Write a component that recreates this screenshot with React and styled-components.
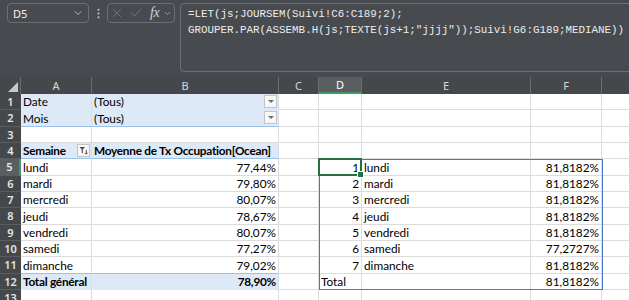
import styled, { createGlobalStyle } from "styled-components";
import { ChevronDown, X, Check, EllipsisVertical } from "lucide-react";

const GlobalStyle = createGlobalStyle`
  html, body { margin: 0; padding: 0; background: #ffffff; }
  body { width: 629px; height: 300px; overflow: hidden; }
`;

const COLS = [
  { key: "A", width: 71 },
  { key: "B", width: 187 },
  { key: "C", width: 40 },
  { key: "D", width: 43 },
  { key: "E", width: 169 },
  { key: "F", width: 71 },
  { key: "G", width: 110 },
];

const ROW_H = 16.33;
const HEAD_H = 17;
const ROWHEAD_W = 21;

const pivot = (text, extra = {}) => ({ text, fill: true, ...extra });

const days = [
  ["lundi", "77,44%", "81,8182%"],
  ["mardi", "79,80%", "81,8182%"],
  ["mercredi", "80,07%", "81,8182%"],
  ["jeudi", "78,67%", "81,8182%"],
  ["vendredi", "80,07%", "81,8182%"],
  ["samedi", "77,27%", "77,2727%"],
  ["dimanche", "79,02%", "81,8182%"],
];

const rows = [
  { n: 1, A: pivot("Date"), B: pivot("(Tous)", { drop: true }) },
  {
    n: 2,
    A: pivot("Mois", { bottomLine: true }),
    B: pivot("(Tous)", { drop: true, bottomLine: true }),
  },
  { n: 3 },
  {
    n: 4,
    A: pivot("Semaine", { bold: true, filter: true, bottomLine: true }),
    B: pivot("Moyenne de Tx Occupation[Ocean]", { bold: true, bottomLine: true }),
  },
  ...days.map(([day, avg, med], i) => ({
    n: 5 + i,
    A: { text: day },
    B: { text: avg, right: true },
    D: { text: String(i + 1), right: true },
    E: { text: day },
    F: { text: med, right: true },
  })),
  {
    n: 12,
    A: pivot("Total général", { bold: true, topLine: true }),
    B: pivot("78,90%", { bold: true, right: true, topLine: true }),
    D: { text: "Total" },
    F: { text: "81,8182%", right: true },
  },
  { n: 13 },
];

const Page = styled.div`
  width: 629px;
  height: 300px;
  display: flex;
  flex-direction: column;
  overflow: hidden;
  font-family: Lato, "Liberation Sans", sans-serif;
`;

const TopBar = styled.div`
  height: 77px;
  flex: none;
  background: #474b4f;
  display: flex;
  align-items: flex-start;
  padding: 3px 0 0 7px;
  box-sizing: border-box;
  overflow: hidden;
`;

const NameBox = styled.div`
  flex: none;
  width: 82px;
  height: 20px;
  box-sizing: border-box;
  border: 1px solid #6c7074;
  border-radius: 4px;
  display: flex;
  align-items: center;
  justify-content: space-between;
  padding: 0 4px 0 5px;
  color: #f2f2f2;
  font-family: "Noto Sans", sans-serif;
  font-size: 11px;
`;

const Dots = styled.div`
  flex: none;
  width: 18px;
  height: 20px;
  display: flex;
  align-items: center;
  justify-content: center;
  color: #b9bcbf;
`;

const FxBox = styled.div`
  flex: none;
  width: 68px;
  height: 20px;
  box-sizing: border-box;
  border: 1px solid #6c7074;
  border-radius: 4px;
  display: flex;
  align-items: center;
  padding: 0 1px 0 2px;
  gap: 5px;
  color: #7b7f83;
  svg { flex: none; }
`;

const Fx = styled.span`
  font-family: "Liberation Serif", serif;
  font-style: italic;
  font-size: 14px;
  color: #d0d2d4;
  margin-left: 2px;
  margin-right: -1px;
  letter-spacing: -0.5px;
`;

const FormulaBox = styled.div`
  flex: none;
  margin-left: 5px;
  width: 470px;
  height: 69px;
  box-sizing: border-box;
  border: 1px solid #6c7074;
  border-radius: 4px;
  padding: 2px 0 0 7px;
  color: #ececec;
  font-family: "Liberation Mono", monospace;
  font-size: 10.85px;
  line-height: 16px;
  white-space: pre;
`;

const Sheet = styled.div`
  position: relative;
  display: grid;
  grid-template-columns: ${ROWHEAD_W}px ${COLS.map((c) => c.width + "px").join(" ")};
  grid-template-rows: ${HEAD_H}px repeat(${rows.length}, ${ROW_H}px);
`;

const Corner = styled.div`
  background: #45484b;
  position: relative;
  border-right: 1px solid #6a6d70;
  &::after {
    content: "";
    position: absolute;
    right: 2px;
    bottom: 2px;
    border-style: solid;
    border-width: 0 0 10px 10px;
    border-color: transparent transparent #c9c9c9 transparent;
  }
`;

const ColHead = styled.div`
  background: ${(p) => (p.$active ? "#5b5e61" : "#45484b")};
  color: ${(p) => (p.$active ? "#ffffff" : "#d9d9d9")};
  border-right: 1px solid #6a6d70;
  border-bottom: ${(p) => (p.$active ? "2px solid #3f9a64" : "none")};
  box-sizing: border-box;
  display: flex;
  align-items: center;
  justify-content: center;
  font-family: "Noto Sans", sans-serif;
  font-size: 11px;
`;

const RowHead = styled.div`
  background: ${(p) => (p.$active ? "#5b5e61" : "#45484b")};
  color: #e6e6e6;
  border-bottom: 1px solid #5a5d60;
  border-right: ${(p) => (p.$active ? "2px solid #3f9a64" : "none")};
  box-sizing: border-box;
  display: flex;
  align-items: center;
  justify-content: center;
  font-family: "Noto Sans", sans-serif;
  font-size: 11px;
  font-weight: 600;
`;

const Cell = styled.div`
  position: relative;
  box-sizing: border-box;
  background: ${(p) => (p.$fill ? "#dde9f6" : "#ffffff")};
  border-right: 1px solid ${(p) => (p.$fill ? "#d2dfec" : "#dcdcdc")};
  border-bottom: 1px solid ${(p) => (p.$line ? "#9bc2e6" : p.$fill ? "#dde9f6" : "#dcdcdc")};
  border-top: ${(p) => (p.$topLine ? "1px solid #9bc2e6" : "none")};
  margin-top: ${(p) => (p.$topLine ? "-1px" : "0")};
  display: flex;
  align-items: flex-end;
  justify-content: ${(p) => (p.$right ? "flex-end" : "flex-start")};
  padding: 0 2px 0 2px;
  color: #000000;
  font-size: 11.8px;
  font-weight: ${(p) => (p.$bold ? 700 : 400)};
  letter-spacing: ${(p) => (p.$bold ? "-0.25px" : "0")};
  line-height: 15px;
  white-space: nowrap;
`;

const DropBtn = styled.div`
  position: absolute;
  right: 1px;
  top: 1px;
  width: 13px;
  height: 13px;
  box-sizing: border-box;
  background: #f7f7f7;
  border: 1px solid #c4c4c4;
  display: flex;
  align-items: center;
  justify-content: center;
  &::after {
    content: "";
    border-style: solid;
    border-width: 3px 3px 0 3px;
    border-color: #6f6f6f transparent transparent transparent;
  }
`;

const FilterBtn = styled.div`
  position: absolute;
  right: 1px;
  top: 1px;
  width: 13px;
  height: 13px;
  box-sizing: border-box;
  background: #f7f7f7;
  border: 1px solid #c4c4c4;
  display: flex;
  align-items: center;
  justify-content: center;
`;

const Range = styled.div`
  position: absolute;
  border: 1px solid #4a78c8;
  pointer-events: none;
`;

const Selection = styled.div`
  position: absolute;
  border: 2px solid #217346;
  box-sizing: border-box;
  pointer-events: none;
  &::after {
    content: "";
    position: absolute;
    right: -4px;
    bottom: -4px;
    width: 5px;
    height: 5px;
    background: #217346;
    border: 1px solid #ffffff;
  }
`;

const colLeft = (key) => {
  let x = ROWHEAD_W;
  for (const c of COLS) {
    if (c.key === key) return x;
    x += c.width;
  }
  return x;
};
const colRight = (key) => colLeft(key) + COLS.find((c) => c.key === key).width;
const rowTop = (n) => HEAD_H + (n - 1) * ROW_H;

const FilterGlyph = () => (
  <svg width="9" height="9" viewBox="0 0 9 9">
    <path d="M0.5 1 H6 L3.8 3.6 V7.5 L2.7 6.8 V3.6 Z" fill="#4b4b4b" />
    <path d="M7.3 4 V8 M6 6.8 L7.3 8.2 L8.6 6.8" stroke="#4b4b4b" strokeWidth="1" fill="none" />
  </svg>
);

const App = () => {
  return (
    <Page>
      <GlobalStyle />
      <TopBar>
        <NameBox>
          <span>D5</span>
          <ChevronDown size={12} color="#c9cbcd" strokeWidth={1.6} />
        </NameBox>
        <Dots>
          <EllipsisVertical size={13} strokeWidth={2} />
        </Dots>
        <FxBox>
          <X size={14} strokeWidth={1.4} />
          <Check size={14} strokeWidth={1.4} />
          <Fx>fx</Fx>
          <ChevronDown size={9} color="#c9cbcd" strokeWidth={1.6} />
        </FxBox>
        <FormulaBox>
          {"=LET(js;JOURSEM(Suivi!C6:C189;2);\nGROUPER.PAR(ASSEMB.H(js;TEXTE(js+1;\"jjjj\"));Suivi!G6:G189;MEDIANE))"}
        </FormulaBox>
      </TopBar>
      <Sheet>
        <Corner />
        {COLS.map((c) => (
          <ColHead key={c.key} $active={c.key === "D"}>
            {c.key}
          </ColHead>
        ))}
        {rows.map((row) => [
          <RowHead key={"h" + row.n} $active={row.n === 5}>
            {row.n}
          </RowHead>,
          ...COLS.map((c) => {
            const cell = row[c.key] || {};
            return (
              <Cell
                key={row.n + c.key}
                $fill={cell.fill}
                $bold={cell.bold}
                $right={cell.right}
                $line={cell.bottomLine}
                $topLine={cell.topLine}
              >
                {cell.text}
                {cell.drop && <DropBtn />}
                {cell.filter && (
                  <FilterBtn>
                    <FilterGlyph />
                  </FilterBtn>
                )}
              </Cell>
            );
          }),
        ])}
        <Range
          style={{
            left: colLeft("D"),
            top: rowTop(5),
            width: colRight("F") - colLeft("D") - 1,
            height: rowTop(13) - rowTop(5) - 2,
          }}
        />
        <Selection
          style={{
            left: colLeft("D") - 1,
            top: rowTop(5) - 1,
            width: colRight("D") - colLeft("D") + 1,
            height: ROW_H + 1,
          }}
        />
      </Sheet>
    </Page>
  );
};

export default App;
